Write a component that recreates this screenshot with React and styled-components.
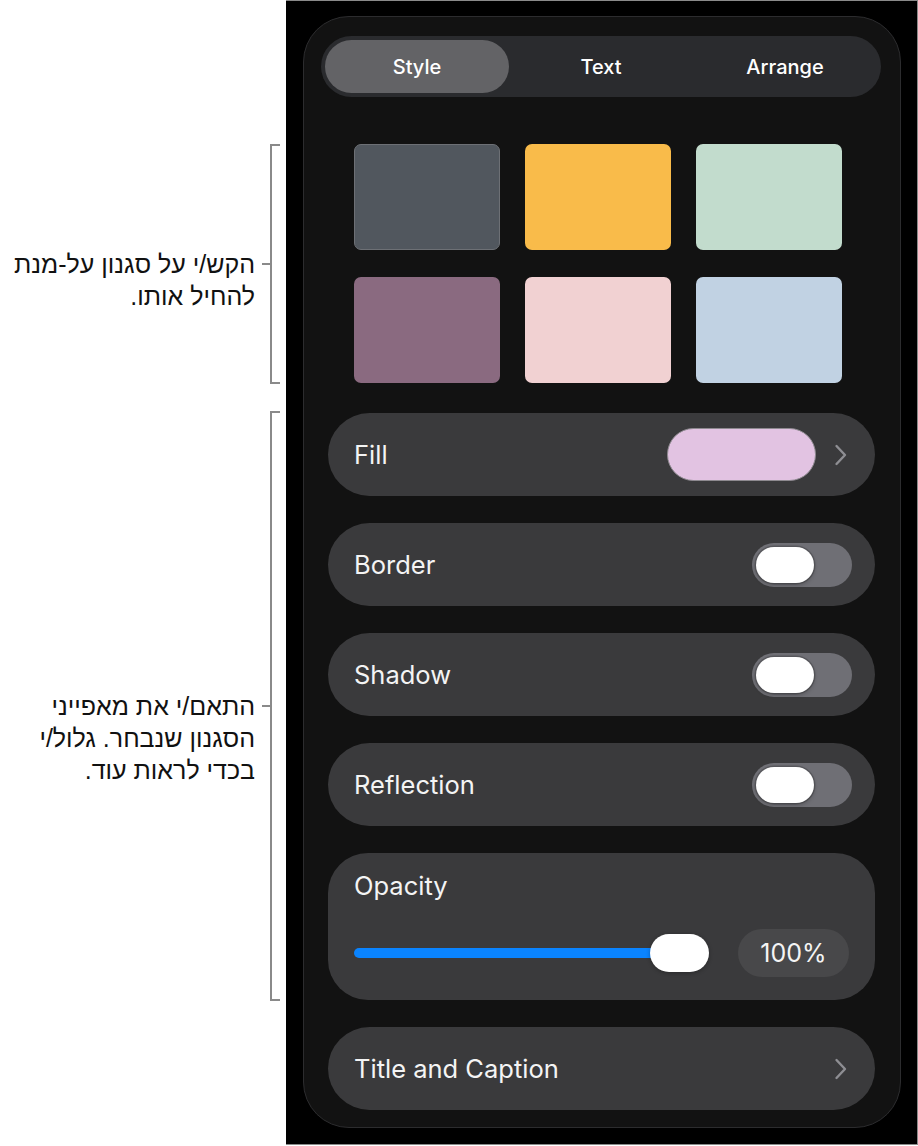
import React, { useState } from "react";
import styled, { createGlobalStyle } from "styled-components";

const GlobalStyle = createGlobalStyle`
  body {
    margin: 0;
    background: #ffffff;
    font-family: Inter, "Liberation Sans", sans-serif;
  }
`;

const swatches = ["#51575e", "#f9bb4a", "#c2dccd", "#8a6a80", "#f1d1d2", "#c1d2e3"];

const Chevron = () => (
  <svg width="14" height="22" viewBox="0 0 14 22" fill="none">
    <path
      d="M2.5 2 L11 11 L2.5 20"
      stroke="#8e8e93"
      strokeWidth="2.4"
      strokeLinecap="round"
      strokeLinejoin="round"
    />
  </svg>
);

const Toggle = ({ on, onClick }) => (
  <ToggleTrack on={on} onClick={onClick}>
    <ToggleKnob on={on} />
  </ToggleTrack>
);

const ToggleRow = ({ label }) => {
  const [on, setOn] = useState(false);
  return (
    <Row>
      <RowLabel>{label}</RowLabel>
      <Toggle on={on} onClick={() => setOn(!on)} />
    </Row>
  );
};

export default function App() {
  const [tab, setTab] = useState("Style");

  return (
    <Page>
      <GlobalStyle />
      <Annotations>
        <Callout>
          <CalloutText pad={104}>
            הקש/י על סגנון על-מנת
            <br />
            להחיל אותו.
          </CalloutText>
          <Bracket height={240} />
        </Callout>
        <Callout>
          <CalloutText pad={279}>
            התאם/י את מאפייני
            <br />
            הסגנון שנבחר. גלול/י
            <br />
            בכדי לראות עוד.
          </CalloutText>
          <Bracket height={590} />
        </Callout>
      </Annotations>

      <Screen>
        <Panel>
          <Tabs>
            {["Style", "Text", "Arrange"].map((t) => (
              <Tab key={t} active={tab === t} onClick={() => setTab(t)}>
                {t}
              </Tab>
            ))}
          </Tabs>

          <SwatchGrid>
            {swatches.map((c, i) => (
              <Swatch key={c} color={c} outlined={i === 0} />
            ))}
          </SwatchGrid>

          <Rows>
            <Row>
              <RowLabel>Fill</RowLabel>
              <RowEnd>
                <FillPreview />
                <Chevron />
              </RowEnd>
            </Row>
            <ToggleRow label="Border" />
            <ToggleRow label="Shadow" />
            <ToggleRow label="Reflection" />

            <OpacityCard>
              <RowLabel>Opacity</RowLabel>
              <SliderLine>
                <Slider>
                  <SliderFill />
                  <SliderThumb />
                </Slider>
                <ValuePill>100%</ValuePill>
              </SliderLine>
            </OpacityCard>

            <Row>
              <RowLabel>Title and Caption</RowLabel>
              <RowEnd>
                <Chevron />
              </RowEnd>
            </Row>
          </Rows>
        </Panel>
      </Screen>
    </Page>
  );
}

const Page = styled.div`
  display: flex;
  width: 918px;
  height: 1146px;
`;

const Annotations = styled.div`
  width: 286px;
  flex-shrink: 0;
  padding-top: 144px;
  box-sizing: border-box;
  display: flex;
  flex-direction: column;
  gap: 27px;
`;

const Callout = styled.div`
  display: flex;
  justify-content: flex-end;
  align-items: flex-start;
  padding-right: 6px;
`;

const CalloutText = styled.div`
  direction: rtl;
  text-align: right;
  font-family: "Liberation Sans", "DejaVu Sans", sans-serif;
  font-size: 25px;
  line-height: 32px;
  color: #111111;
  padding-top: ${({ pad }) => pad}px;
  margin-right: 15px;
  white-space: nowrap;
`;

const Bracket = styled.div`
  position: relative;
  width: 10px;
  height: ${({ height }) => height}px;
  border: 2px solid #8a8a8a;
  border-right: none;
  box-sizing: border-box;

  &::before {
    content: "";
    position: absolute;
    top: calc(50% - 1px);
    right: 100%;
    width: 10px;
    height: 2px;
    background: #8a8a8a;
  }
`;

const Screen = styled.div`
  flex: 1;
  height: 1145px;
  background: #000000;
  border-top: 1px solid #8a8a8a;
  border-right: 1px solid #8a8a8a;
  border-bottom: 1px solid #8a8a8a;
  box-sizing: border-box;
  padding: 15px 15px 0 17px;
`;

const Panel = styled.div`
  width: 598px;
  height: 1112px;
  box-sizing: border-box;
  background: #121212;
  border: 1px solid #2c2c2e;
  border-radius: 46px;
  padding: 19px 19px 0 17px;
  display: flex;
  flex-direction: column;
`;

const Tabs = styled.div`
  display: grid;
  grid-template-columns: repeat(3, 1fr);
  height: 61px;
  padding: 4px;
  box-sizing: border-box;
  background: #2a2b2e;
  border-radius: 31px;
`;

const Tab = styled.div`
  display: flex;
  align-items: center;
  justify-content: center;
  border-radius: 27px;
  background: ${({ active }) => (active ? "#636366" : "transparent")};
  color: #ffffff;
  font-size: 20px;
  font-weight: 500;
  cursor: pointer;
`;

const SwatchGrid = styled.div`
  display: grid;
  grid-template-columns: repeat(3, 146px);
  grid-auto-rows: 106px;
  column-gap: 25px;
  row-gap: 27px;
  margin-top: 47px;
  padding-left: 33px;
`;

const Swatch = styled.div`
  background: ${({ color }) => color};
  border-radius: 7px;
  box-sizing: border-box;
  border: ${({ outlined }) => (outlined ? "1.5px solid #6d7075" : "none")};
`;

const Rows = styled.div`
  display: flex;
  flex-direction: column;
  gap: 27px;
  margin: 30px 6px 0 7px;
`;

const Row = styled.div`
  display: flex;
  align-items: center;
  justify-content: space-between;
  height: 83px;
  padding: 0 23px 0 26px;
  box-sizing: border-box;
  background: #3a3a3c;
  border-radius: 42px;
`;

const RowLabel = styled.div`
  color: #f4f4f4;
  font-size: 25.5px;
  font-weight: 400;
`;

const RowEnd = styled.div`
  display: flex;
  align-items: center;
  gap: 18px;
  padding-right: 4px;
`;

const FillPreview = styled.div`
  width: 149px;
  height: 53px;
  box-sizing: border-box;
  border-radius: 27px;
  background: #e2c3e2;
  border: 1.5px solid #8e8a90;
`;

const ToggleTrack = styled.div`
  display: flex;
  align-items: center;
  justify-content: ${({ on }) => (on ? "flex-end" : "flex-start")};
  width: 100px;
  height: 44px;
  padding: 0 4px;
  box-sizing: border-box;
  border-radius: 22px;
  background: ${({ on }) => (on ? "#34c759" : "#6f6f75")};
  cursor: pointer;
`;

const ToggleKnob = styled.div`
  width: 58px;
  height: 36px;
  border-radius: 18px;
  background: #ffffff;
  box-shadow: 0 0 0 1.5px rgba(0, 0, 0, 0.18), 0 2px 4px rgba(0, 0, 0, 0.25);
`;

const OpacityCard = styled.div`
  display: flex;
  flex-direction: column;
  height: 147px;
  box-sizing: border-box;
  padding: 17px 26px 0 26px;
  background: #3a3a3c;
  border-radius: 40px;
`;

const SliderLine = styled.div`
  display: flex;
  align-items: center;
  gap: 29px;
  margin-top: 28px;
`;

const Slider = styled.div`
  position: relative;
  flex: 1;
  height: 38px;
  display: flex;
  align-items: center;
`;

const SliderFill = styled.div`
  width: calc(100% - 30px);
  height: 10px;
  border-radius: 5px;
  background: #0a84ff;
`;

const SliderThumb = styled.div`
  position: absolute;
  right: 0;
  top: 0;
  width: 59px;
  height: 38px;
  border-radius: 19px;
  background: #ffffff;
  box-shadow: 0 1px 4px rgba(0, 0, 0, 0.3);
`;

const ValuePill = styled.div`
  width: 111px;
  height: 48px;
  border-radius: 24px;
  background: #48484a;
  color: #f4f4f4;
  font-size: 25px;
  display: flex;
  align-items: center;
  justify-content: center;
`;
